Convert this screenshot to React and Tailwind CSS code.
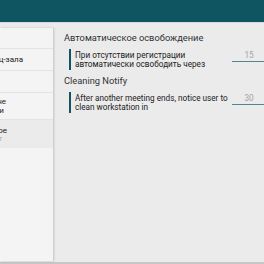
export default function App() {
  const line = 'w-[140px] shrink-0 text-right whitespace-nowrap';

  return (
    <div className="w-[264px] h-[264px] overflow-hidden bg-[#ebebeb] flex flex-col font-['Roboto',sans-serif]">
      <div className="h-[22px] shrink-0 bg-[#0f5461]"></div>
      <div className="h-[1px] shrink-0 bg-[#d6dcdd]"></div>
      <div className="flex flex-1 pt-[5px] min-h-0">
        <div className="w-[53px] shrink-0 bg-[#f4f4f4] overflow-hidden shadow-[1px_0_2px_rgba(0,0,0,0.18)] z-10">
          <div className="h-[21px] border-b border-[#e3e3e3]"></div>
          <div className="h-[22px] border-b border-[#e3e3e3] flex items-center text-[8px] leading-[9px] text-[#222]">
            <div className={`${line} ml-[-117px]`}>Бронирование конференц-зала</div>
          </div>
          <div className="h-[22px] border-b border-[#e3e3e3]"></div>
          <div className="h-[27px] border-b border-[#e3e3e3] flex flex-col justify-center text-[8px] leading-[9px] text-[#222]">
            <div className={`${line} ml-[-134px]`}>Уведомления на экране</div>
            <div className={`${line} ml-[-136px]`}>и рассылки</div>
          </div>
          <div className="h-[28px] bg-[#ebebeb] flex flex-col justify-center">
            <div className={`${line} ml-[-133px] text-[8px] leading-[9px] text-[#222]`}>Автоматическое</div>
            <div className={`${line} ml-[-138px] text-[7px] leading-[8px] text-[#aaa]`}>освобождение мест</div>
          </div>
        </div>
        <div className="flex-1 pl-[11px] pt-[4px]">
          <div className="text-[9.3px] leading-[12px] text-[#333] whitespace-nowrap">Автоматическое освобождение</div>
          <div className="mt-[5px] ml-[5px] flex items-center h-[21px]">
            <div className="w-[2px] self-stretch bg-[#0f5461]"></div>
            <div className="w-[161px] pl-[4px] text-[8.2px] leading-[9px] text-[#222]">
              При отсутствии регистрации автоматически освободить через
            </div>
            <div className="w-[34px] shrink-0 self-start mt-[1px] border-b border-[#4f8791] text-center text-[8.2px] leading-[10px] text-[#a3a3a3] pb-[1px]">15</div>
          </div>
          <div className="mt-[5px] text-[9.3px] leading-[12px] text-[#333] whitespace-nowrap">Cleaning Notify</div>
          <div className="mt-[5px] ml-[5px] flex items-center h-[21px]">
            <div className="w-[2px] self-stretch bg-[#0f5461]"></div>
            <div className="w-[161px] pl-[4px] text-[8.2px] leading-[9px] text-[#222]">
              After another meeting ends, notice user to clean workstation in
            </div>
            <div className="w-[34px] shrink-0 self-start mt-[1px] border-b border-[#4f8791] text-center text-[8.2px] leading-[10px] text-[#a3a3a3] pb-[1px]">30</div>
          </div>
        </div>
      </div>
      <div className="h-[3px] shrink-0 bg-[#ebebeb] flex flex-col">
        <div className="h-[1px]"></div>
        <div className="h-[2px] bg-[#c6c6c6]"></div>
      </div>
    </div>
  );
}
